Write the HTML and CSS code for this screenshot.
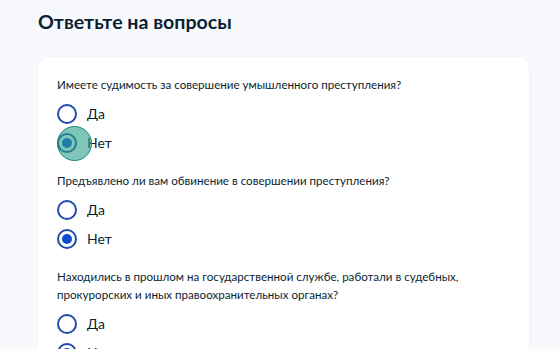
FILE: index.html
```html
<!DOCTYPE html>
<html lang="ru">
<head>
<meta charset="utf-8">
<link rel="stylesheet" href="styles.css">
</head>
<body>
<div class="page">
  <h1 class="title">Ответьте на вопросы</h1>
  <div class="card">
    <div class="question">
      <p class="q-text">Имеете судимость за совершение умышленного преступления?</p>
      <div class="options">
        <label class="option"><span class="radio"></span><span class="label">Да</span></label>
        <label class="option"><span class="radio checked focus"></span><span class="label">Нет</span></label>
      </div>
    </div>
    <div class="question">
      <p class="q-text">Предъявлено ли вам обвинение в совершении преступления?</p>
      <div class="options">
        <label class="option"><span class="radio"></span><span class="label">Да</span></label>
        <label class="option"><span class="radio checked"></span><span class="label">Нет</span></label>
      </div>
    </div>
    <div class="question">
      <p class="q-text">Находились в прошлом на государственной службе, работали в судебных,<br>прокурорских и иных правоохранительных органах?</p>
      <div class="options">
        <label class="option"><span class="radio"></span><span class="label">Да</span></label>
        <label class="option"><span class="radio checked"></span><span class="label">Нет</span></label>
      </div>
    </div>
  </div>
</div>
</body>
</html>
```

FILE: styles.css
```css
html, body {
  margin: 0;
  padding: 0;
  background: #f8f9fc;
  font-family: Lato, "Noto Sans", sans-serif;
  color: #0b1f33;
}
.page {
  padding: 10px 31px 0 38px;
}
.title {
  margin: 0;
  font-size: 19.6px;
  line-height: 24px;
  font-weight: 700;
  color: #0b1f33;
}
.card {
  margin-top: 23px;
  background: #ffffff;
  border-radius: 12px;
  padding: 19px 19px 20px 19px;
  box-shadow: 0 1px 4px rgba(11, 31, 51, 0.04);
  display: flex;
  flex-direction: column;
  gap: 15px;
}
.q-text {
  margin: 0;
  font-size: 11.6px;
  line-height: 18px;
  color: #0b1f33;
}
.options {
  margin-top: 5px;
  display: flex;
  flex-direction: column;
}
.option {
  display: flex;
  align-items: center;
  gap: 10px;
  height: 29px;
}
.radio {
  position: relative;
  box-sizing: border-box;
  width: 20px;
  height: 20px;
  border: 2px solid #1f4aa8;
  border-radius: 50%;
  flex: none;
}
.radio.checked::before {
  content: "";
  position: absolute;
  left: 3px;
  top: 3px;
  width: 10px;
  height: 10px;
  border-radius: 50%;
  background: #0d4cd3;
}
.radio.focus::after {
  content: "";
  position: absolute;
  left: -2px;
  top: -9px;
  width: 33px;
  height: 33px;
  border-radius: 50%;
  background: rgba(42, 160, 140, 0.6);
  border: 1.5px solid #1a8a78;
}
.label {
  font-size: 14px;
  line-height: 18px;
  color: #0b1f33;
}
```
